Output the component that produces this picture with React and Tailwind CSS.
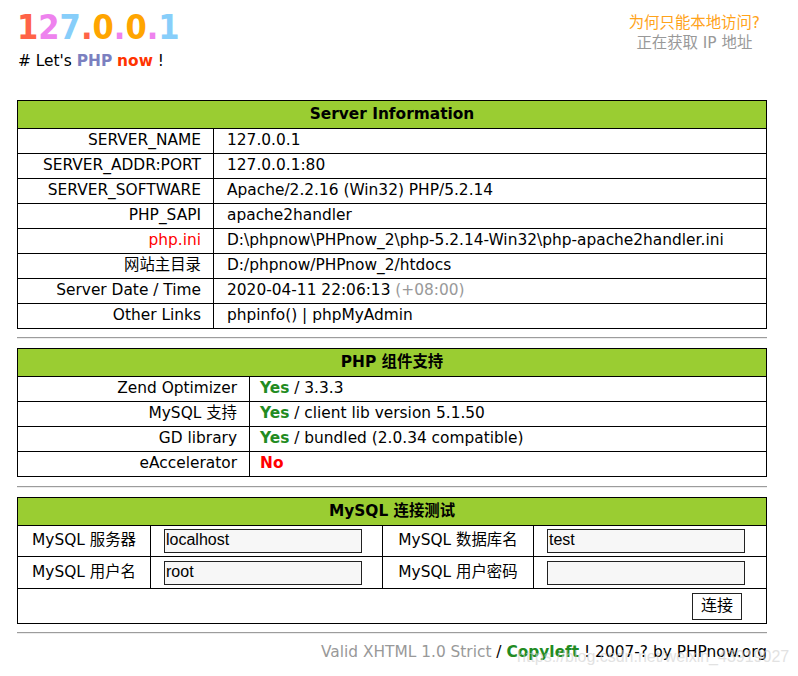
const serverRows = [
  ["SERVER_NAME", "127.0.0.1"],
  ["SERVER_ADDR:PORT", "127.0.0.1:80"],
  ["SERVER_SOFTWARE", "Apache/2.2.16 (Win32) PHP/5.2.14"],
  ["PHP_SAPI", "apache2handler"],
  ["php.ini", "D:\\phpnow\\PHPnow_2\\php-5.2.14-Win32\\php-apache2handler.ini", "red"],
  ["网站主目录", "D:/phpnow/PHPnow_2/htdocs"],
  ["Server Date / Time", "date"],
  ["Other Links", "phpinfo() | phpMyAdmin"],
];

const phpRows = [
  ["Zend Optimizer", true, " / 3.3.3"],
  ["MySQL 支持", true, " / client lib version 5.1.50"],
  ["GD library", true, " / bundled (2.0.34 compatible)"],
  ["eAccelerator", false, ""],
];

const Hr = () => (
  <div className="h-0 border-t border-t-[#9c9c9c] border-b border-b-[#ececec]" />
);

const Header = ({ children, span = 2 }) => (
  <tr className="h-[28px] bg-[#9acd32]">
    <th colSpan={span} className="border border-black font-bold text-center">
      {children}
    </th>
  </tr>
);

const Field = ({ value }) => (
  <div className="w-[198px] h-[24px] border border-[#222] bg-[#f7f7f7] text-[16px] leading-[20px] font-['Liberation_Sans',Arial,sans-serif] text-black pl-px">
    {value}
  </div>
);

export default function App() {
  return (
    <div className="relative w-[798px] h-[676px] bg-white text-[15.4px] text-black font-['DejaVu_Sans','Noto_Sans_CJK_SC',sans-serif]">
      <div className="ml-[17px] w-[750px]">
        <div className="flex justify-between h-[100px]">
          <div className="pt-[7px]">
            <h1 className="text-[34px] leading-[40px] font-bold font-['DejaVu_Sans_Condensed','DejaVu_Sans',sans-serif] [font-stretch:condensed]">
              <span className="text-[#ff6347]">1</span>
              <span className="text-[#ee82ee]">2</span>
              <span className="text-[#87cefa]">7</span>
              <span className="text-[#ff6347]">.</span>
              <span className="text-[#ffa500]">0</span>
              <span className="text-[#ee82ee]">.</span>
              <span className="text-[#ffa500]">0</span>
              <span className="text-[#ee82ee]">.</span>
              <span className="text-[#87cefa]">1</span>
            </h1>
            <p className="mt-[4px] pl-px leading-[20px]">
              # Let's <b className="text-[#7b80c0]">PHP</b>{" "}
              <b className="text-[#ff3300]">now</b> !
            </p>
          </div>
          <div className="pt-[13px] pr-[7px] text-center leading-[20px]">
            <div className="text-[#ffa31a]">为何只能本地访问?</div>
            <div className="text-[#999]">正在获取 IP 地址</div>
          </div>
        </div>

        <table className="w-full border-collapse border border-black">
          <tbody>
            <Header>Server Information</Header>
            {serverRows.map(([k, v, c]) => (
              <tr key={k} className="h-[25px]">
                <td className={`w-[196px] border border-black text-right pr-[12px] ${c === "red" ? "text-[#ff0000]" : ""}`}>
                  {k}
                </td>
                <td className="border border-black pl-[13px]">
                  {v === "date" ? (
                    <>
                      2020-04-11 22:06:13 <span className="text-[#999]">(+08:00)</span>
                    </>
                  ) : (
                    v
                  )}
                </td>
              </tr>
            ))}
          </tbody>
        </table>

        <div className="mt-[8px] mb-[9px]">
          <Hr />
        </div>

        <table className="w-full border-collapse border border-black">
          <tbody>
            <Header>PHP 组件支持</Header>
            {phpRows.map(([k, ok, rest]) => (
              <tr key={k} className="h-[25px]">
                <td className="w-[232px] border border-black text-right pr-[12px]">{k}</td>
                <td className="border border-black pl-[10px]">
                  {ok ? (
                    <b className="text-[#228b22]">Yes</b>
                  ) : (
                    <b className="text-[#ff0000]">No</b>
                  )}
                  {rest}
                </td>
              </tr>
            ))}
          </tbody>
        </table>

        <div className="mt-[9px] mb-[9px]">
          <Hr />
        </div>

        <table className="w-full border-collapse border border-black">
          <tbody>
            <Header span={4}>MySQL 连接测试</Header>
            <tr className="h-[31px]">
              <td className="w-[133px] border border-black text-center">MySQL 服务器</td>
              <td className="w-[232px] border border-black pl-[13px]">
                <Field value="localhost" />
              </td>
              <td className="w-[151px] border border-black text-center">MySQL 数据库名</td>
              <td className="border border-black pl-[13px]">
                <Field value="test" />
              </td>
            </tr>
            <tr className="h-[32px]">
              <td className="border border-black text-center">MySQL 用户名</td>
              <td className="border border-black pl-[13px]">
                <Field value="root" />
              </td>
              <td className="border border-black text-center">MySQL 用户密码</td>
              <td className="border border-black pl-[13px]">
                <Field value="" />
              </td>
            </tr>
            <tr className="h-[35px]">
              <td colSpan={4} className="border border-black text-right pr-[24px]">
                <button className="w-[50px] h-[27px] border border-[#222] bg-white text-[16px] leading-[20px] align-middle">
                  连接
                </button>
              </td>
            </tr>
          </tbody>
        </table>

        <div className="mt-[8px]">
          <Hr />
        </div>

        <p className="mt-[8px] text-right leading-[20px]">
          <span className="text-[#999]">Valid XHTML 1.0 Strict</span> /{" "}
          <b className="text-[#228b22]">Copyleft</b> ! 2007-? by PHPnow.org
        </p>
      </div>

      <div className="absolute left-[517px] top-[647px] text-[16px] leading-[20px] font-['Liberation_Sans',Arial,sans-serif] text-[#d0d0d0] opacity-60 pointer-events-none">
        https://blog.csdn.net/weixin_43919027
      </div>
    </div>
  );
}
